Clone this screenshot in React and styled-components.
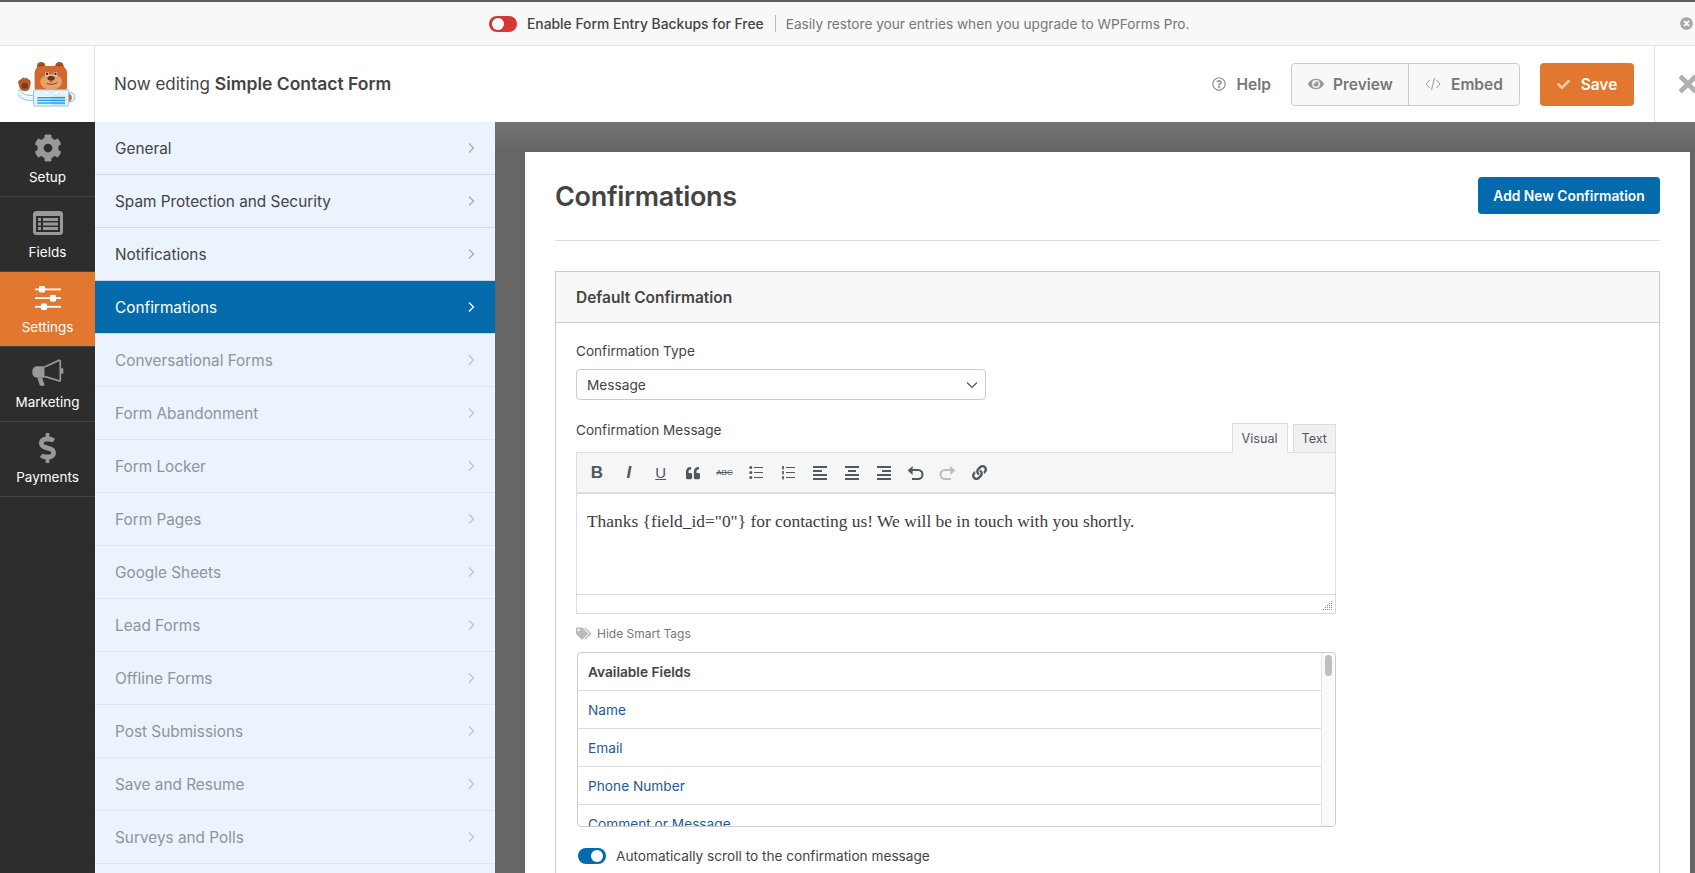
import React from 'react';
import styled, { createGlobalStyle } from 'styled-components';
import { FaCog, FaDollarSign, FaCheck, FaTags, FaEye, FaTimes, FaTimesCircle, FaRegQuestionCircle, FaQuoteLeft, FaLink } from 'react-icons/fa';

const Global = createGlobalStyle`
  html, body { margin: 0; padding: 0; height: 100%; overflow: hidden; background: #fff; }
  * { box-sizing: border-box; }
  body { font-family: Inter, "Liberation Sans", sans-serif; color: #444; -webkit-font-smoothing: antialiased; }
`;
const Page = styled.div`display:flex;flex-direction:column;height:873px;overflow:hidden;border-top:2px solid #5c5c5e;`;
const Notice = styled.div`height:44px;flex:none;background:#f8f8f8;border-bottom:1px solid #e6e6e6;display:flex;align-items:center;padding-left:489px;position:relative;font-size:13.65px;`;
const Switch = styled.span`width:28px;height:16px;border-radius:8px;background:${p=>p.$on?'#036aab':'#d63638'};display:flex;align-items:center;flex:none;padding:0 3px;justify-content:${p=>p.$on?'flex-end':'flex-start'};
  &::after{content:'';width:12px;height:12px;border-radius:50%;background:#fff;}`;
const NoticeStrong = styled.span`font-weight:500;font-size:13.85px;color:#444;margin-left:10px;`;
const NoticeSep = styled.span`width:1px;height:17px;background:#bbb;margin:0 10px 0 11px;`;
const NoticeText = styled.span`color:#777;`;
const NoticeClose = styled.span`position:absolute;right:2px;top:15px;color:#a6a6a6;font-size:13px;display:flex;`;
const Header = styled.header`height:76px;flex:none;display:flex;align-items:center;background:#fff;`;
const LogoCell = styled.div`width:95px;height:100%;border-right:1px solid #ddd;display:flex;align-items:center;justify-content:center;flex:none;`;
const Title = styled.div`margin:0 0 2px 19px;font-size:17px;color:#444;flex:1;strong{font-weight:600;font-size:17.5px;}`;
const HelpLink = styled.div`display:flex;align-items:center;gap:11px;color:#777;font-size:15.5px;font-weight:600;margin-right:20px;svg{color:#999;font-size:14px;}`;
const Group = styled.div`display:flex;height:43px;border:1px solid #ccc;border-radius:4px;background:#f8f8f8;margin-right:20px;`;
const GroupBtn = styled.div`display:flex;align-items:center;gap:${p=>p.$gap}px;padding-left:16px;color:#777;font-size:15.5px;font-weight:600;width:${p=>p.$w}px;& + &{border-left:1px solid #ccc;}svg{color:#999;}`;
const SaveBtn = styled.div`width:94px;height:43px;background:#e27730;border-radius:4px;display:flex;align-items:center;justify-content:center;gap:11px;color:#fff;font-size:15.5px;font-weight:600;svg{color:#f3c9ac;font-size:13px;}`;
const CloseCell = styled.div`width:41px;margin-left:20px;height:100%;border-left:1px solid #ddd;display:flex;align-items:center;padding-left:20px;flex:none;overflow:hidden;color:#b0b0b0;font-size:26px;svg{flex:none;}`;
const Body = styled.div`flex:1;display:flex;min-height:0;`;
const Rail = styled.nav`width:95px;flex:none;background:#2d2d2d;`;
const RailItem = styled.div`height:75px;border-bottom:1px solid #444;display:flex;flex-direction:column;align-items:center;color:#fff;font-size:13.5px;background:${p=>p.$active?'#e27730':'transparent'};padding-top:11px;
  svg{color:${p=>p.$active?'#fff':'#999'};height:30px;flex:none;}
  span{margin-top:6px;}`;
const Menu = styled.div`width:400px;flex:none;background:#ebf3fc;overflow:hidden;`;
const MenuItem = styled.div`height:53px;border-bottom:1px solid ${p=>p.$muted?'#dce6f2':'#ced9e6'};display:flex;align-items:center;justify-content:space-between;padding:0 19px 0 20px;font-size:15.35px;color:${p=>p.$active?'#fff':p.$muted?'#8f949a':'#444'};background:${p=>p.$active?'#036aab':'transparent'};
  svg{color:${p=>p.$active?'#fff':p.$muted?'#bcc3cb':'#a6adb5'};}`;
const Main = styled.main`flex:1;min-width:0;background:linear-gradient(#727272,#666 30px);padding:30px 5px 0 30px;overflow:hidden;`;
const Card = styled.div`background:#fff;height:900px;padding:25px 30px;`;
const CardHead = styled.div`display:flex;justify-content:space-between;align-items:center;padding-bottom:26px;border-bottom:1px solid #ddd;`;
const H1 = styled.h1`margin:0;padding-top:2px;font-size:27px;font-weight:600;color:#444;letter-spacing:-.3px;`;
const AddBtn = styled.div`width:182px;height:37px;background:#036aab;border-radius:4px;color:#fff;font-size:13.8px;font-weight:600;display:flex;align-items:center;justify-content:center;`;
const Box = styled.section`margin-top:30px;border:1px solid #ccc;`;
const BoxHead = styled.div`height:51px;background:#f8f8f8;border-bottom:1px solid #ccc;display:flex;align-items:center;padding-left:20px;font-size:15.5px;font-weight:600;color:#444;`;
const BoxBody = styled.div`padding:19px 20px;`;
const Label = styled.div`font-size:13.6px;line-height:18px;color:#444;`;
const Select = styled.div`margin-top:9px;width:410px;height:31px;border:1px solid #ccc;border-radius:4px;display:flex;align-items:center;justify-content:space-between;padding:0 7px 0 10px;font-size:13.7px;color:#444;svg{color:#555;}`;
const EditorTop = styled.div`width:760px;margin-top:21px;height:31px;display:flex;justify-content:space-between;position:relative;`;
const Tabs = styled.div`display:flex;align-items:flex-end;gap:5px;position:relative;top:1px;`;
const Tab = styled.div`height:${p=>p.$active?30:29}px;padding:0 ${p=>p.$active?9:8}px 1px;border:1px solid #dcdcde;border-bottom:${p=>p.$active?'none':'1px solid #dcdcde'};font-size:12.6px;color:#50575e;background:${p=>p.$active?'#f5f6f6':'#f0f0f1'};display:flex;align-items:center;`;
const Editor = styled.div`width:760px;border:1px solid #dcdcde;`;
const Toolbar = styled.div`height:41px;background:#f5f6f6;border-bottom:2px solid #dcdcde;display:flex;align-items:center;padding-left:4px;`;
const ToolBtn = styled.span`width:31.9px;height:24px;flex:none;display:flex;align-items:center;justify-content:center;color:${p=>p.$dim?'#b8bec4':'#50575e'};font-family:"Liberation Sans",sans-serif;
  font-weight:${p=>p.$bold?700:400};font-style:${p=>p.$italic?'italic':'normal'};font-size:${p=>p.$fs||17}px;text-decoration:${p=>p.$underline?'underline':p.$strike?'line-through':'none'};`;
const EditorText = styled.div`height:100px;padding:16px 10px;font-family:"Liberation Serif",serif;font-size:17.4px;line-height:22px;color:#3c3c3c;`;
const Status = styled.div`height:19px;border-top:1px solid #dcdcde;display:flex;justify-content:flex-end;align-items:flex-end;padding:0 3px 3px 0;`;
const TagToggle = styled.div`display:flex;align-items:center;gap:6px;margin-top:10px;height:18px;font-size:12px;color:#777;svg{color:#bbb;font-size:15px;}`;
const TagList = styled.div`margin-top:10px;margin-left:1px;width:759px;height:175px;border:1px solid #ccc;border-radius:4px;overflow:hidden;position:relative;`;
const TagRow = styled.div`height:38px;flex:none;border-bottom:1px solid #ddd;display:flex;align-items:center;padding-left:10px;font-size:13.7px;color:${p=>p.$head?'#444':'#1f5a94'};font-weight:${p=>p.$head?600:400};`;
const Track = styled.div`position:absolute;right:0;top:0;bottom:0;width:14px;background:#fafafa;border-left:1px solid #e5e5e5;
  &::after{content:'';position:absolute;left:3px;top:2px;width:7px;height:21px;border-radius:4px;background:#bfbfbf;}`;
const ScrollRow = styled.div`display:flex;align-items:center;gap:10px;margin-top:21px;margin-left:2px;font-size:13.65px;color:#444;`;

const Bear = () => (
  <svg width="58" height="48" viewBox="55 60 175 145">
    <circle cx="213" cy="172" r="14" fill="#e9f5fa" stroke="#8fc3d8" strokeWidth="3"/>
    <path d="M207 160a14 14 0 0 1 6 24l-6 2z" fill="#cf6a2c"/>
    <path d="M62 150c4 14 24 20 44 16l2 14c-24 6-50 0-56-24z" fill="#e9f5fa" stroke="#8fc3d8" strokeWidth="3"/>
    <circle cx="125" cy="79" r="13" fill="#a9521f"/>
    <circle cx="180" cy="79" r="13" fill="#a9521f"/>
    <circle cx="125" cy="81" r="7" fill="#7e3c18"/>
    <circle cx="180" cy="81" r="7" fill="#7e3c18"/>
    <rect x="105" y="78" width="98" height="84" rx="20" fill="#cf6a2c"/>
    <ellipse cx="155" cy="126" rx="33" ry="24" fill="#e7a269"/>
    <circle cx="143" cy="102" r="6" fill="#fff"/><circle cx="143" cy="102" r="4" fill="#2f2f3f"/>
    <circle cx="168" cy="102" r="6" fill="#fff"/><circle cx="168" cy="102" r="4" fill="#2f2f3f"/>
    <ellipse cx="155" cy="115" rx="11" ry="7" fill="#6e3218"/>
    <path d="M155 120v8M142 130c8 6 22 4 32-2" stroke="#6e3218" strokeWidth="2.500" fill="none"/>
    <rect x="102" y="150" width="106" height="49" rx="5" fill="#e6f4fa" stroke="#8fc3d8" strokeWidth="3"/>
    <path d="M125 150l28 8-15 10zM185 150l-30 8 15 10z" fill="#fff" stroke="#a8d0e0" strokeWidth="1.500"/>
    <rect x="113" y="172" width="84" height="4" fill="#1b9ae4"/>
    <rect x="113" y="180" width="84" height="4" fill="#1b9ae4"/>
    <rect x="113" y="188" width="84" height="4" fill="#1b9ae4"/>
    <rect x="155" y="168" width="42" height="28" fill="#1c6fa8" opacity=".12"/>
    <path d="M57 130c-2-9 5-11 8-9 0-7 8-8 10-4 3-4 10-2 10 3 6 0 8 4 7 10l-3 15c-2 9-21 11-27 2z" fill="#b9582a" stroke="#9b4a20" strokeWidth="2"/>
    <ellipse cx="75" cy="138" rx="10" ry="9" fill="#7c3a1c"/>
  </svg>
);
const Chevron = () => (
  <svg width="9" height="12" viewBox="0 0 9 12" fill="none"><path d="M2 1.500 6.500 6 2 10.500" stroke="currentColor" strokeWidth="1.300"/></svg>
);
const SelectCaret = () => (
  <svg width="12" height="8" viewBox="0 0 12 8" fill="none"><path d="M1 1.500 6 6.500 11 1.500" stroke="currentColor" strokeWidth="1.200"/></svg>
);
const FieldsIcon = () => (
  <svg width="30" height="30" viewBox="0 0 30 30">
    <rect x="0" y="3" width="30" height="24" rx="3.500" fill="#999"/>
    <rect x="3" y="8" width="24" height="16" fill="#2d2d2d"/>
    <rect x="5" y="10" width="3" height="3" fill="#999"/><rect x="5" y="14.500" width="3" height="3" fill="#999"/><rect x="5" y="19" width="3" height="3" fill="#999"/>
    <rect x="10" y="10" width="15" height="3" fill="#999"/><rect x="10" y="14.500" width="15" height="3" fill="#999"/><rect x="10" y="19" width="15" height="3" fill="#999"/>
  </svg>
);
const SlidersIcon = () => (
  <svg width="26" height="30" viewBox="0 0 26 30" fill="currentColor">
    <rect x="0" y="5.500" width="26" height="1.800"/><rect x="4" y="3" width="6" height="6.500" rx="1"/>
    <rect x="0" y="14.200" width="26" height="1.800"/><rect x="15" y="12" width="6" height="6.500" rx="1"/>
    <rect x="0" y="22.900" width="26" height="1.800"/><rect x="6" y="20.500" width="6" height="6.500" rx="1"/>
  </svg>
);
const HornIcon = () => (
  <svg width="32" height="30" viewBox="95 26 95 88">
    <path d="M110 50h22v34h-22a14 14 0 0 1-14-14v-6a14 14 0 0 1 14-14z" fill="#999"/>
    <path d="M111 84h14l7 20a3 3 0 0 1-3 4h-7a4 4 0 0 1-4-2z" fill="#999"/>
    <path d="M132 52l42-19a3 3 0 0 1 5 3v54a3 3 0 0 1-5 3l-42-13" fill="none" stroke="#999" strokeWidth="5"/>
    <rect x="180" y="56" width="8" height="16" rx="3" fill="#999"/>
  </svg>
);
const CodeIcon = () => (
  <svg width="16" height="14" viewBox="0 0 16 14" fill="none" stroke="#999" strokeWidth="1"><path d="M4.500 3 1 7l3.500 4M11.500 3 15 7l-3.500 4M9.500 1 6.500 13"/></svg>
);
const Lines = ({ kind }) => {
  const rows = {
    left: [[0,14],[0,9],[0,14],[0,14]],
    center: [[0,14],[3,8],[0,14],[0,14]],
    right: [[0,14],[5,9],[0,14],[0,14]],
  }[kind];
  return (
    <svg width="14" height="14" viewBox="0 0 14 14" fill="currentColor">
      {rows.map(([x,w],i) => <rect key={i} x={x} y={i*4} width={w} height="2"/>)}
    </svg>
  );
};
const ListIcon = ({ ordered }) => (
  <svg width="14" height="14" viewBox="0 0 14 14" fill="currentColor">
    {[1,6,11].map(y => (
      <g key={y}>
        {ordered ? <rect x="1" y={y-1} width="2" height="3.400" opacity=".85"/> : <circle cx="1.800" cy={y+.5} r="1.500"/>}
        <rect x="5" y={y} width="9" height="1"/>
      </g>
    ))}
  </svg>
);
const Arrow = ({ flip }) => (
  <svg width="17" height="15" viewBox="0 0 17 15" fill="none" stroke="currentColor" strokeWidth="2" style={flip?{transform:'scaleX(-1)'}:undefined}>
    <path d="M4 5h7a4.500 4.500 0 0 1 0 9H5"/><path d="M6 1 1.500 5 6 9z" fill="currentColor" stroke="none" transform="translate(-1 0) scale(1.1)"/>
  </svg>
);
const Grip = () => (
  <svg width="9" height="9" viewBox="0 0 9 9" fill="#8c8f94">
    {[[8,0],[6,2],[8,2],[4,4],[6,4],[8,4],[2,6],[4,6],[6,6],[8,6],[0,8],[2,8],[4,8],[6,8],[8,8]].map(([x,y]) => <rect key={x+'-'+y} x={x} y={y} width="1" height="1"/>)}
  </svg>
);

const rail = [
  { label:'Setup', icon:<FaCog size={28}/> },
  { label:'Fields', icon:<FieldsIcon/> },
  { label:'Settings', icon:<SlidersIcon/>, active:true },
  { label:'Marketing', icon:<HornIcon/> },
  { label:'Payments', icon:<FaDollarSign size={27}/> },
];
const active = ['General','Spam Protection and Security','Notifications'];
const muted = ['Conversational Forms','Form Abandonment','Form Locker','Form Pages','Google Sheets','Lead Forms','Offline Forms','Post Submissions','Save and Resume','Surveys and Polls'];

export default function App() {
  return (
    <>
      <Global/>
      <Page>
        <Notice>
          <Switch/>
          <NoticeStrong>Enable Form Entry Backups for Free</NoticeStrong>
          <NoticeSep/>
          <NoticeText>Easily restore your entries when you upgrade to WPForms Pro.</NoticeText>
          <NoticeClose><FaTimesCircle/></NoticeClose>
        </Notice>
        <Header>
          <LogoCell><Bear/></LogoCell>
          <Title>Now editing <strong>Simple Contact Form</strong></Title>
          <HelpLink><FaRegQuestionCircle/>Help</HelpLink>
          <Group>
            <GroupBtn $w={116} $gap={9}><FaEye size={16}/>Preview</GroupBtn>
            <GroupBtn $w={111} $gap={10}><CodeIcon/>Embed</GroupBtn>
          </Group>
          <SaveBtn><FaCheck/>Save</SaveBtn>
          <CloseCell><FaTimes/></CloseCell>
        </Header>
        <Body>
          <Rail>
            {rail.map(r => <RailItem key={r.label} $active={r.active}>{r.icon}<span>{r.label}</span></RailItem>)}
          </Rail>
          <Menu>
            {active.map(m => <MenuItem key={m}>{m}<Chevron/></MenuItem>)}
            <MenuItem $active>Confirmations<Chevron/></MenuItem>
            {muted.map(m => <MenuItem key={m} $muted>{m}<Chevron/></MenuItem>)}
          </Menu>
          <Main>
            <Card>
              <CardHead>
                <H1>Confirmations</H1>
                <AddBtn>Add New Confirmation</AddBtn>
              </CardHead>
              <Box>
                <BoxHead>Default Confirmation</BoxHead>
                <BoxBody>
                  <Label>Confirmation Type</Label>
                  <Select>Message<SelectCaret/></Select>
                  <EditorTop>
                    <Label>Confirmation Message</Label>
                    <Tabs><Tab $active>Visual</Tab><Tab>Text</Tab></Tabs>
                  </EditorTop>
                  <Editor>
                    <Toolbar>
                      <ToolBtn $bold>B</ToolBtn>
                      <ToolBtn $italic $bold>I</ToolBtn>
                      <ToolBtn $underline $fs={15}>U</ToolBtn>
                      <ToolBtn><FaQuoteLeft size={14}/></ToolBtn>
                      <ToolBtn $strike $fs={8}>ABC</ToolBtn>
                      <ToolBtn><ListIcon/></ToolBtn>
                      <ToolBtn><ListIcon ordered/></ToolBtn>
                      <ToolBtn><Lines kind="left"/></ToolBtn>
                      <ToolBtn><Lines kind="center"/></ToolBtn>
                      <ToolBtn><Lines kind="right"/></ToolBtn>
                      <ToolBtn><Arrow/></ToolBtn>
                      <ToolBtn $dim><Arrow flip/></ToolBtn>
                      <ToolBtn><FaLink size={15}/></ToolBtn>
                    </Toolbar>
                    <EditorText>Thanks {'{field_id="0"}'} for contacting us! We will be in touch with you shortly.</EditorText>
                    <Status><Grip/></Status>
                  </Editor>
                  <TagToggle><FaTags/>Hide Smart Tags</TagToggle>
                  <TagList>
                    <TagRow $head>Available Fields</TagRow>
                    <TagRow>Name</TagRow>
                    <TagRow>Email</TagRow>
                    <TagRow>Phone Number</TagRow>
                    <TagRow>Comment or Message</TagRow>
                    <Track/>
                  </TagList>
                  <ScrollRow><Switch $on/>Automatically scroll to the confirmation message</ScrollRow>
                </BoxBody>
              </Box>
            </Card>
          </Main>
        </Body>
      </Page>
    </>
  );
}
